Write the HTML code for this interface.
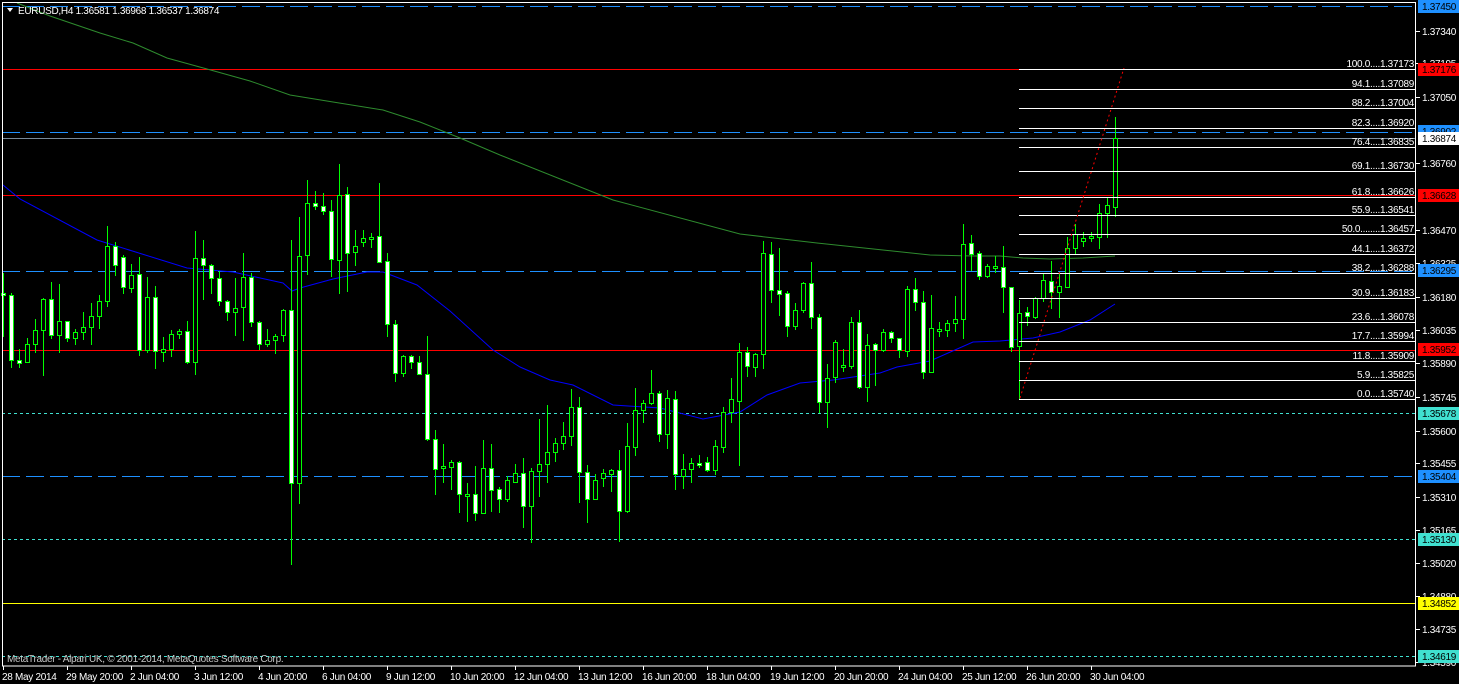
<!DOCTYPE html>
<html><head><meta charset="utf-8"><style>
html,body{margin:0;padding:0;background:#000;width:1459px;height:684px;overflow:hidden}
svg{display:block}
text{font-family:"Liberation Sans",sans-serif;font-size:10px;letter-spacing:-0.3px}
</style></head><body>
<svg id="s" width="1459" height="684" viewBox="0 0 1459 684" xmlns="http://www.w3.org/2000/svg">
<rect width="1459" height="684" fill="#000"/>
<g id="lines">
<line x1="2" y1="6.5" x2="1416" y2="6.5" stroke="#1e90ff" stroke-dasharray="18 6"/>
<line x1="2" y1="69.5" x2="1416" y2="69.5" stroke="#ff0000"/>
<line x1="2" y1="132.5" x2="1416" y2="132.5" stroke="#1e90ff" stroke-dasharray="18 6"/>
<line x1="2" y1="138.5" x2="1416" y2="138.5" stroke="#778899"/>
<line x1="2" y1="195.5" x2="1416" y2="195.5" stroke="#ff0000"/>
<line x1="2" y1="271.5" x2="1416" y2="271.5" stroke="#1e90ff" stroke-dasharray="18 6"/>
<line x1="2" y1="350.5" x2="1416" y2="350.5" stroke="#ff0000"/>
<line x1="2" y1="413.5" x2="1416" y2="413.5" stroke="#40e0d0" stroke-dasharray="3 3"/>
<line x1="2" y1="476.5" x2="1416" y2="476.5" stroke="#1e90ff" stroke-dasharray="18 6"/>
<line x1="2" y1="539.5" x2="1416" y2="539.5" stroke="#40e0d0" stroke-dasharray="3 3"/>
<line x1="2" y1="603.5" x2="1416" y2="603.5" stroke="#ffff00"/>
<line x1="2" y1="656.5" x2="1416" y2="656.5" stroke="#40e0d0" stroke-dasharray="3 3"/>
</g>
<polyline fill="none" stroke="#2e8b2e" stroke-width="1" points="17,3 50,16 100,33 133,43 167,58 207,69 250,81 290,95 333,102 383,110 420,122 460,138 500,155 613,200 740,234 817,243 930,255 973,256 1000,256 1023,258 1050,259 1083,258 1115,256"/>
<polyline fill="none" stroke="#0000ff" stroke-width="1" points="3,185 20,199 97,240 187,268 233,272 283,283 292,291 300,288 333,279 367,272 383,272 417,285 450,311 493,350 520,367 550,380 573,385 613,405 660,408 703,419 740,412 767,395 800,383 833,380 880,373 897,367 930,361 973,342 1000,341 1033,338 1060,332 1090,320 1115,304"/>
<g id="candles"></g>
<g id="fib" stroke="#fff" fill="#fff"></g>
<line x1="1020" y1="398" x2="1124" y2="68" stroke="#ff0000" stroke-dasharray="2 3"/>
<rect x="2.5" y="2.5" width="1413" height="663.5" fill="none" stroke="#fff"/>
<polygon points="7,8 13,8 10,12" fill="#fff"/>
<text x="18" y="14" fill="#fff">EURUSD,H4  1.36581 1.36968 1.36537 1.36874</text>
<text x="7" y="662" fill="#c8c8c8">MetaTrader - Alpari UK, © 2001-2014, MetaQuotes Software Corp.</text>
<g id="axis" fill="#fff"></g>
<g fill="#fff">
<text x="2" y="680">28 May 2014</text>
<text x="66" y="680">29 May 20:00</text>
<text x="130" y="680">2 Jun 04:00</text>
<text x="194" y="680">3 Jun 12:00</text>
<text x="258" y="680">4 Jun 20:00</text>
<text x="322" y="680">6 Jun 04:00</text>
<text x="386" y="680">9 Jun 12:00</text>
<text x="450" y="680">10 Jun 20:00</text>
<text x="514" y="680">12 Jun 04:00</text>
<text x="578" y="680">13 Jun 12:00</text>
<text x="642" y="680">16 Jun 20:00</text>
<text x="706" y="680">18 Jun 04:00</text>
<text x="770" y="680">19 Jun 12:00</text>
<text x="834" y="680">20 Jun 20:00</text>
<text x="898" y="680">24 Jun 04:00</text>
<text x="962" y="680">25 Jun 12:00</text>
<text x="1026" y="680">26 Jun 20:00</text>
<text x="1090" y="680">30 Jun 04:00</text>
</g>
</svg>
<script>
var NS="http://www.w3.org/2000/svg";
function el(p,t,a){var e=document.createElementNS(NS,t);for(var k in a)e.setAttribute(k,a[k]);p.appendChild(e);return e;}
var seg2=[["W",400,405,340,530],["W",406,601,400,623],["W",601,610,567,623],["H",553,607,535,610],["H",511,553,477,578],["H",418,511,414,647],["W",418,526,366,536],["H",484,526,372,578],["W",484,535,484,545],["H",517,535,507,554],["H",502,517,457,540],["H",469,502,430,554],["H",424,469,405,507],["H",259,424,198,440],["W",259,316,246,347],["W",292,382,286,401],["H",346,385,312,398],["W",343,571,291,587],["H",412,571,351,578],["W",412,574,378,626],["H",568,577,531,605],["H",523,568,510,590],["H",514,523,507,536],["W",514,607,483,611],["H",295,607,213,644],["W",295,316,240,419],["W",316,355,313,401],["W",355,424,334,437],["W",424,457,420,482],["H",445,457,354,527],["H",352,442,279,542],["W",352,487,340,500],["W",487,553,483,569],["H",541,553,507,560],["H",529,541,521,581],["H",451,526,447,545],["W",451,970,240,1214],["H",289,970,171,1031],["H",130,286,60,344],["W",130,139,94,151],["W",139,154,99,164],["W",154,298,120,350],["H",106,301,12,401],["W",103,280,81,395],["H",259,277,210,317],["H",235,247,210,262],["H",232,238,219,263],["W",229,307,69,307],["W",304,493,279,530],["W",493,640,480,665],["H",589,640,586,650],["W",589,607,586,628],["W",607,643,589,643],["W",643,838,528,844],["W",838,928,811,1004],["H",918,922,853,970]];
var seg3=[["H",787,800,780,870],["W",787,883,783,940],["H",882,885,850,965],["W",883,940,798,962],["H",805,940,720,943],["W",805,870,732,935],["W",868,898,860,940],["H",840,898,828,905],["H",820,845,793,850],["W",820,918,773,983],["H",813,918,803,1030],["H",793,813,657,890],["H",757,793,615,850],["H",730,757,715,785],["H",708,730,667,750],["H",622,708,568,737],["W",622,817,591,910],["W",817,898,795,970],["H",840,898,822,900],["H",820,835,807,860],["H",810,823,808,875],["W",810,933,750,1025],["H",738,933,668,940],["H",630,740,565,767],["H",608,630,600,668],["H",580,610,510,615],["W",580,703,573,725],["H",595,703,570,748],["W",598,823,573,870],["H",808,827,762,868],["H",790,808,773,848],["W",788,793,765,803],["W",787,810,772,815],["H",738,810,720,825],["H",637,742,622,760],["H",598,637,533,668],["H",457,602,430,797],["W",457,498,440,532],["H",463,500,460,530],["H",160,463,123,508],["W",163,270,125,310],["W",270,283,143,347],["W",280,378,272,412],["H",330,377,308,390],["H",250,330,245,340],["W",250,350,185,388],["W",350,607,342,640],["H",535,607,492,683],["H",425,532,420,548],["H",495,502,447,515],["H",367,497,352,508],["W",367,560,330,568],["H",435,560,402,605],["W",433,450,428,557],["H",397,450,387,457],["W",395,415,392,428],["W",415,450,413,475],["H",268,452,258,472],["W",268,307,234,332],["W",305,517,273,538],["H",385,517,285,518],["H",388,390,366,410],["H",370,390,360,412],["H",358,370,288,395],["H",132,358,72,418],["W",130,163,105,213],["W",160,228,153,240],["H",199,229,193,235],["H",198,201,167,220]];
var seg1=[["W",800,862,738,938],["W",862,1040,862,1055],["H",940,1037,900,1197],["W",937,947,922,977],["H",895,950,890,958],["H",841,895,822,907],["W",843,875,783,928],["H",858,875,815,953],["H",745,860,712,865],["H",703,743,672,762],["H",715,723,695,740],["H",708,715,697,727],["H",640,710,613,748],["H",615,638,590,713],["H",415,620,352,650]];
var C=[];
seg2.forEach(function(c){C.push([c[0],c[1]/3+160,c[2]/3+160,c[3]/3+160,c[4]/3+160]);});
seg3.forEach(function(c){C.push([c[0],c[1]/3+200,c[2]/3+200,c[3]/3+200,c[4]/3+200]);});
seg1.forEach(function(c){C.push([c[0],c[1]/3,c[2]/3,c[3]/3,c[4]/3]);});
var g=document.getElementById("candles");
C.forEach(function(c,k){
 var cx=3+8*k;var t=Math.round(c[1]),b=Math.round(c[2]),h=Math.round(c[3]),l=Math.round(c[4]);
 el(g,"rect",{x:cx,y:h,width:1,height:Math.max(1,l-h),fill:"#00ff00"});
 var bh=Math.max(2,b-t);
 el(g,"rect",{x:cx-2,y:t,width:5,height:bh+1,fill:"#00ff00"});
 if(bh>1) el(g,"rect",{x:cx-1,y:t+1,width:3,height:bh-1,fill:c[0]=="W"?"#ffffff":"#000000"});
});
var fib=[["100.0....1.37173",69],["94.1....1.37089",89],["88.2....1.37004",108],["82.3....1.36920",128],["76.4....1.36835",147],["69.1....1.36730",171],["61.8....1.36626",197],["55.9....1.36541",215],["50.0........1.36457",234],["44.1....1.36372",254],["38.2....1.36288",273],["30.9....1.36183",298],["23.6....1.36078",322],["17.7....1.35994",341],["11.8....1.35909",361],["5.9....1.35825",380],["0.0....1.35740",399]];
var fg=document.getElementById("fib");
fib.forEach(function(f){
 el(fg,"rect",{x:1019,y:f[1],width:396,height:1,stroke:"none"});
 var t=el(fg,"text",{x:1414,y:f[1]-2,"text-anchor":"end",stroke:"none"});t.textContent=f[0];
});
var ax=document.getElementById("axis");
var ticks=[["1.37340",31],["1.37195",63],["1.37050",97],["1.36760",163],["1.36470",230],["1.36325",263],["1.36180",297],["1.36035",330],["1.35890",363],["1.35745",397],["1.35600",431],["1.35455",463],["1.35310",497],["1.35165",530],["1.35020",563],["1.34880",596],["1.34735",629],["1.34590",662]];
ticks.forEach(function(t){
 el(ax,"rect",{x:1416,y:t[1],width:4,height:1,fill:"#fff"});
 var e=el(ax,"text",{x:1422,y:t[1]+4,fill:"#fff"});e.textContent=t[0];
});
var labs=[["1.37450",6,"#1e90ff"],["1.37176",69,"#ff0000"],["1.36902",131,"#1e90ff"],["1.36874",138,"#ffffff"],["1.36628",195,"#ff0000"],["1.36295",270,"#1e90ff"],["1.35952",349,"#ff0000"],["1.35678",413,"#40e0d0"],["1.35404",476,"#1e90ff"],["1.35130",539,"#40e0d0"],["1.34852",603,"#ffff00"],["1.34619",656,"#40e0d0"]];
labs.forEach(function(l){
 el(ax,"rect",{x:1418,y:l[1]-6,width:41,height:13,fill:l[2]});
 var e=el(ax,"text",{x:1422,y:l[1]+4,fill:"#000"});e.textContent=l[0];
});
for(var i=0;i<18;i++){el(ax,"rect",{x:3+64*i,y:666,width:1,height:4,fill:"#fff"});}
</script>
</body></html>
